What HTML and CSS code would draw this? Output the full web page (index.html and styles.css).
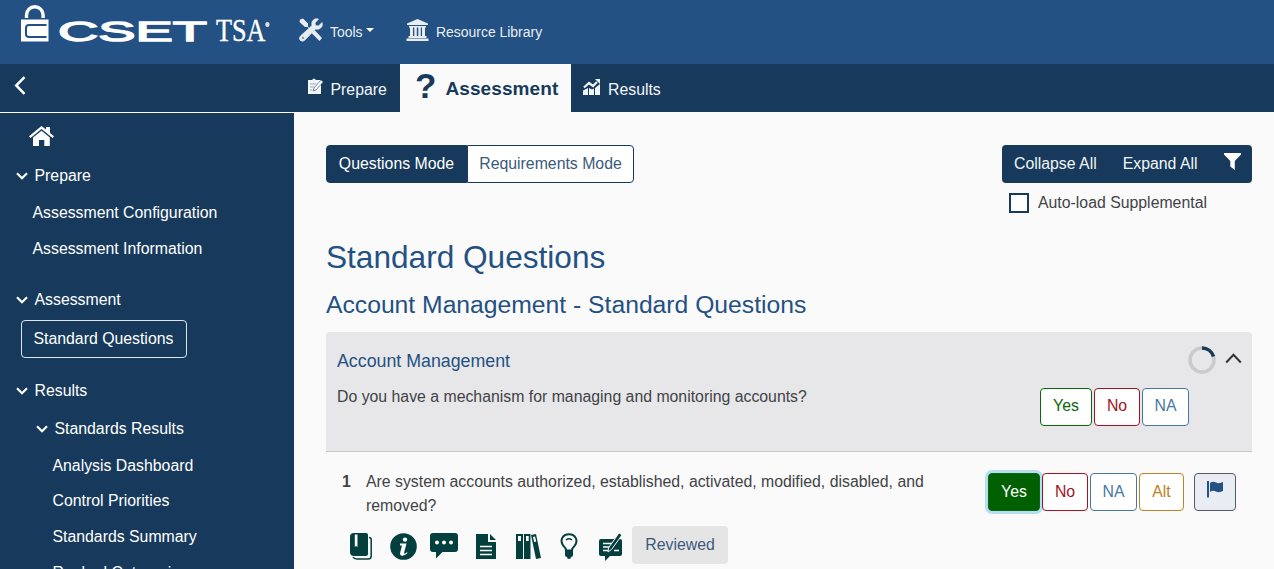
FILE: index.html
```html
<!DOCTYPE html>
<html lang="en">
<head>
<meta charset="utf-8">
<title>CSET TSA - Standard Questions</title>
<link rel="stylesheet" href="styles.css">
</head>
<body>
<header class="topbar">
  <svg class="logo" width="260" height="54" viewBox="0 0 260 54" fill="#fff">
    <path d="M6.500 18v-3a8.300 8.300 0 0 1 16.600 0v3" fill="none" stroke="#fff" stroke-width="3.400"/>
    <path d="M1 19.500h27.500v22H1z"/>
    <path d="M26.500 25H9q-3 0-3 3v6q0 3 3 3h17.500" fill="none" stroke="#235183" stroke-width="2"/>
    <text class="logo-cset" x="38" y="40.500" textLength="149" lengthAdjust="spacingAndGlyphs">CSET</text>
    <text class="logo-tsa" x="196" y="41" textLength="53" lengthAdjust="spacingAndGlyphs">TSA<tspan class="logo-reg" dy="-14">®</tspan></text>
  </svg>
  <a class="top-link tools">
    <svg width="24" height="24" viewBox="0 0 24 24" fill="#e8edf2"><path d="M1 1.500 4 .5 9 5.500v3l4.500 4.500 2-1 7.500 8-2.500 3-8-8 .5-2L8.500 9H6L.5 4z"/><path d="M23 4.500 19.500 8l-3-.5L16 5l3.500-4C15 0 12 3 13 7.500l-11 10c-4 4 1 7.500 4 4.500l10.500-11c4 1 8-2 6.500-6.500zM4 18.700a1.200 1.200 0 1 1 0 2.400 1.200 1.200 0 0 1 0-2.400z" fill-rule="evenodd" stroke="#e8edf2" stroke-width=".7"/></svg>
    <span>Tools</span><i class="caret"></i>
  </a>
  <a class="top-link library">
    <svg width="23" height="22" viewBox="0 0 23 22" fill="#e8edf2"><path d="M11.500 0 22 4.500V6H1V4.500zM3 7h17v1.500H3zM4 8h3v9H4zm4.300 0h2.500v9H8.300zm4 0h2.500v9h-2.500zM16 8h3v9h-3zM2.500 17h18v2h-18zM.5 19.500h22V22H.5z"/></svg>
    <span>Resource Library</span>
  </a>
</header>

<nav class="tabbar">
  <div class="collapse"><svg width="12" height="19" viewBox="0 0 12 19"><path d="M10.500 1.200 2.200 9.500l8.300 8.300" fill="none" stroke="#fff" stroke-width="2.500"/></svg></div>
  <a class="tab tab-prepare">
    <svg width="17" height="18" viewBox="0 0 17 18"><path d="M1 2h4q2-3 4 0h5v14H1z" fill="#f2f5f7"/><path d="M3 6h6M3 9h4M3 12h2" stroke="#9aabb9"/><path d="m6 13 1-3 7-8 2 2-7 8z" fill="#fff" stroke="#6d8296" stroke-width=".9"/></svg>
    <span>Prepare</span>
  </a>
  <a class="tab active"><span class="qmark">?</span><span class="tab-title">Assessment</span></a>
  <a class="tab tab-results">
    <svg width="18" height="17" viewBox="0 0 18 17" fill="#f2f5f7"><path d="M0 11.500 5 9v7H0zM6 9l3 1.500 2-1V16H6zm6 0 5-4v11h-5z"/><path d="m1 8.500 5-4.500 4 3 4-4" fill="none" stroke="#f2f5f7" stroke-width="2.200"/><path d="M12 0h5v5z"/></svg>
    <span>Results</span>
  </a>
</nav>

<div class="body">
  <aside class="sidebar">
    <div class="home"><svg width="25" height="20" viewBox="0 0 25 20" fill="#fff"><path d="M12.500 0 17 3.600V1h4v6l4 3.300-1.500 1.700-11-9-11 9L0 10.300z"/><path d="m12.500 4.800 8.300 6.800V20h-5.500v-6H10v6H4v-8.400z"/></svg></div>
    <div class="group"><svg class="chev" viewBox="0 0 12 8"><path d="m1 1.300 5 5 5-5"/></svg>Prepare</div>
    <div class="item">Assessment Configuration</div>
    <div class="item">Assessment Information</div>
    <div class="group spaced"><svg class="chev" viewBox="0 0 12 8"><path d="m1 1.300 5 5 5-5"/></svg>Assessment</div>
    <div class="current">Standard Questions</div>
    <div class="group spaced"><svg class="chev" viewBox="0 0 12 8"><path d="m1 1.300 5 5 5-5"/></svg>Results</div>
    <div class="group nested"><svg class="chev" viewBox="0 0 12 8"><path d="m1 1.300 5 5 5-5"/></svg>Standards Results</div>
    <div class="item deep">Analysis Dashboard</div>
    <div class="item deep">Control Priorities</div>
    <div class="item deep">Standards Summary</div>
    <div class="item deep">Ranked Categories</div>
  </aside>

  <main class="content">
    <div class="toolbar">
      <div class="modes"><button class="mode on">Questions Mode</button><button class="mode">Requirements Mode</button></div>
      <div class="controls">
        <div class="expanders"><span>Collapse All</span><span>Expand All</span>
          <svg width="17" height="17" viewBox="0 0 17 17" fill="#fff"><path d="M0 0h17v1.500L10.800 8v9L6.300 13.500V8L0 1.500z"/></svg></div>
        <label class="autoload"><i class="box"></i>Auto-load Supplemental</label>
      </div>
    </div>
    <h1>Standard Questions</h1>
    <h2>Account Management - Standard Questions</h2>

    <section class="panel">
      <div class="panel-head">
        <h3>Account Management</h3>
        <div class="status">
          <svg width="28" height="28" viewBox="0 0 28 28" fill="none" stroke-width="3.500"><circle cx="14" cy="14" r="12" stroke="#c9cacc"/><path d="M14 2a12 12 0 0 1 11.500 8.500" stroke="#173a5c"/></svg>
          <svg width="17" height="11" viewBox="0 0 17 11"><path d="m1.200 9.500 7.300-7.800 7.300 7.800" fill="none" stroke="#333" stroke-width="2"/></svg>
        </div>
      </div>
      <div class="panel-row">
        <p>Do you have a mechanism for managing and monitoring accounts?</p>
        <div class="answers"><button class="ans yes">Yes</button><button class="ans no">No</button><button class="ans na">NA</button></div>
      </div>
    </section>

    <section class="question">
      <b class="num">1</b>
      <div class="q-main">
        <p>Are system accounts authorized, established, activated, modified, disabled, and removed?</p>
        <div class="tools-row">
          <svg class="ic-book" width="23" height="28" viewBox="0 0 23 28" fill="#043f3f"><path d="M4 0h12q2 0 2 2v19q0 2-2 2H4q-4 0-4-4V4q0-4 4-4z"/><path d="M19 4.500q2.200 0 2.200 2V23q0 3-3 3H7q-3 0-4-2" fill="none" stroke="#043f3f" stroke-width="1.500"/><path d="M4.800 1.500h2.700V14l-1.300-1-1.400 1z" fill="#fafafa"/></svg>
          <svg class="ic-info" width="27" height="27" viewBox="0 0 27 27"><circle cx="13.500" cy="13.500" r="13.300" fill="#043f3f"/><circle cx="15" cy="6.600" r="2.200" fill="#fff"/><path d="M10 10.500h6.500l-2.500 9.500q0 1.500 3-.8l.5.800q-3.500 3.500-6.500 2.500-1.500-1-.8-3L12 12.500h-2z" fill="#fff"/></svg>
          <svg class="ic-comment" width="28" height="26" viewBox="0 0 28 26" fill="#043f3f"><path d="M3 0h22q3 0 3 3v13q0 3-3 3H12.500L6 25.500V19H3q-3 0-3-3V3q0-3 3-3z"/><g fill="#fff"><circle cx="7" cy="9.500" r="2"/><circle cx="14" cy="9.500" r="2"/><circle cx="21" cy="9.500" r="2"/></g></svg>
          <svg class="ic-doc" width="20" height="25" viewBox="0 0 20 25" fill="#043f3f"><path d="M0 0h12v8h8v17H0zM14 0l6 6h-6z"/><path d="M4 12.500h12M4 16.500h12M4 20.500h12" stroke="#fff" stroke-width="1.700"/></svg>
          <svg class="ic-shelf" width="25" height="25" viewBox="0 0 25 25" fill="#043f3f"><path d="M0 0h7v25H0zM8 0h6.500v25H8zM15 1l5-1 5 24-5 1z"/><path d="M2 2h3v5H2zm8 0h2.700v5H10zm7 1 2-.5 1.200 5-2 .5z" fill="#fff"/></svg>
          <svg class="ic-bulb" width="18" height="26" viewBox="0 0 18 26"><path d="M6 17.500q0-2.500-2.500-4.500C-1 7 3 1.200 9 1.200S19 7 14.500 13Q12 15 12 17.500z" fill="none" stroke="#043f3f" stroke-width="2"/><path d="M5 18h8v4q0 2-2 2 0 2-2 2t-2-2q-2 0-2-2z" fill="#043f3f"/><path d="M6 7q3-2.500 6 0" fill="none" stroke="#043f3f" stroke-width="1.500"/></svg>
          <svg class="ic-note" width="24" height="29" viewBox="0 0 24 29" fill="#043f3f"><path d="M2 7h19q2 0 2 2v13q0 2-2 2H11l-5 5v-5H2q-2 0-2-2V9q0-2 2-2z"/><path d="M4 11.500h10M4 15h8M4 18.500h5M15 18.500h5" stroke="#fff" stroke-width="1.400"/><path d="M20 .8 23 3 12.500 17.500 9 20l.5-4z" stroke="#fafafa" stroke-width="1"/></svg>
          <span class="reviewed">Reviewed</span>
        </div>
      </div>
      <div class="answers q-answers"><button class="ans yes chosen">Yes</button><button class="ans no">No</button><button class="ans na">NA</button><button class="ans alt">Alt</button>
        <button class="ans flag"><svg width="17" height="17" viewBox="0 0 17 17" fill="#235183"><path d="M0 0h2v16.500H0z"/><path d="M3 2q3-2 6-.5t7-.5v9q-4 2-7 .5T3 11z"/></svg></button></div>
    </section>
  </main>
</div>
</body>
</html>
```

FILE: styles.css
```css
* { box-sizing: border-box; }
body {
  margin: 0;
  height: 569px;
  overflow: hidden;
  display: flex;
  flex-direction: column;
  background: #fafafa;
  color: #414347;
  font: 15.83px/24px "Liberation Sans", Arial, sans-serif;
}
svg { display: block; flex: none; }
button { font: inherit; margin: 0; padding: 0; }
h1, h2, h3, p { margin: 0; font-weight: 400; }

.topbar {
  flex: none;
  height: 64px;
  display: flex;
  align-items: flex-start;
  padding-left: 20px;
  background: #235183;
  color: #e8edf2;
}
.logo-cset { font: 28px "Liberation Sans", sans-serif; stroke: #fff; stroke-width: 1.3; }
.logo-tsa { font: 32px "Liberation Serif", serif; stroke: #fff; stroke-width: .4; }
.logo-reg { font: 6px "Liberation Sans", sans-serif; }
.top-link { display: flex; align-items: center; height: 28px; font-size: 13.95px; }
.top-link span { padding-top: 3px; }
.tools { margin: 16px 0 0 19px; gap: 7px; width: 107px; }
.caret { border: 4px solid transparent; border-top-color: #fff; border-bottom: 0; margin: 0 0 0 -4px; }
.library { margin-top: 16px; gap: 7px; }

.tabbar { flex: none; height: 48px; display: flex; background: #173a5c; color: #f2f5f7; }
.collapse { width: 294px; padding: 12px 0 0 14px; }
.tab { display: flex; align-items: center; gap: 7px; padding-top: 3px; }
.tab-prepare { width: 106px; padding-left: 12.500px; }
.tab-prepare svg, .tab-results svg { margin-top: -5px; }
.tab.active { width: 171px; padding: 0 0 0 15px; gap: 9px; background: #fafafa; color: #173a5c; height: 49px; z-index: 1; }
.qmark { font-size: 35px; font-weight: 700; line-height: 44px; margin-top: -5px; }
.tab-title { font-size: 19px; font-weight: 700; letter-spacing: .1px; }
.tab-results { padding-left: 12px; }

.body { flex: 1; min-height: 0; display: flex; }
.sidebar { width: 294px; flex: none; overflow: hidden; border-top: 1px solid #fff; background: #173a5c; color: #fff; }
.home { height: 44px; padding: 13px 0 0 29px; }
.group { height: 38px; display: flex; align-items: center; gap: 7px; padding-left: 15.500px; }
.group.spaced { margin-top: 14px; }
.group.nested { padding-left: 35.500px; }
.chev { width: 12px; height: 8px; fill: none; stroke: #fff; stroke-width: 2.2; }
.item { height: 35.800px; line-height: 36px; padding-left: 32.500px; }
.item.deep { padding-left: 52.500px; }
.current { width: 166px; height: 38px; margin: 1px 0 0 20.500px; border: 1px solid #dce6f0; border-radius: 4px; line-height: 35px; padding-left: 12px; white-space: nowrap; }

.content { flex: 1; padding: 33px 22px 0 32px; }
.toolbar { display: flex; justify-content: space-between; height: 92px; }
.modes { display: flex; height: 38px; }
.mode { width: 167px; border: 1px solid #173a5c; border-radius: 0 4px 4px 0; background: #fff; color: #3c5a7b; padding-bottom: 1px; }
.mode.on { width: 141px; border-radius: 4px 0 0 4px; background: #173a5c; color: #fff; }
.expanders { width: 250px; height: 38px; display: flex; align-items: center; gap: 26px; padding: 0 0 1px 12px; background: #173a5c; color: #f2f5f7; border-radius: 4px; white-space: nowrap; }
.expanders svg { margin-top: -4px; }
.autoload { display: flex; align-items: center; gap: 9px; margin: 8px 0 0 7px; }
.box { width: 20px; height: 20px; border: 2px solid #173a5c; background: #fff; }
h1 { font-size: 31.600px; line-height: 40px; color: #235183; }
h2 { font-size: 24.700px; line-height: 30px; margin-top: 13px; color: #235183; }
.panel { margin-top: 12px; height: 120px; padding: 12px 10px 0 11px; background: #e7e7e9; border-bottom: 1px solid #c8c8ca; border-radius: 4px 4px 0 0; }
.panel-head { display: flex; justify-content: space-between; height: 44px; }
h3 { font-size: 17.800px; line-height: 34px; color: #235183; }
.status { display: flex; gap: 9px; padding-top: 2px; }
.status svg:last-child { margin-top: 7px; }
.panel-row { display: flex; justify-content: space-between; padding-right: 53px; }
.panel-row p { line-height: 18px; }
.answers { display: flex; gap: 2px; }
.ans { height: 38px; border: 1px solid; border-radius: 4px; background: #fff; padding-bottom: 1px; }
.yes { width: 52px; color: #0b680b; border-color: #0b680b; }
.no { width: 46px; color: #a0151f; }
.na { width: 47px; color: #4679a2; }
.alt { width: 45px; color: #bd8325; }
.panel-row .ans { padding-bottom: 2px; }
.chosen { background: #006000; color: #fff; box-shadow: 0 0 0 3px #b7ddf5; }
.flag { width: 42px; margin-left: 8px; background: #e9edf3; border-color: #555b66; display: grid; place-items: center; padding-bottom: 6px; }
.question { display: flex; padding: 18px 16px 0; }
.num { width: 24px; }
.q-main { width: 590px; }
.q-main p { width: 575px; }
.tools-row { display: flex; align-items: center; height: 38px; margin: 8px 0 0 -16px; }
.tools-row svg { margin-top: 2px; }
.tools-row .ic-book { margin-top: 4px; }
.ic-info { margin-left: 17px; }
.ic-comment { margin-left: 13px; }
.ic-doc { margin-left: 18px; }
.ic-shelf { margin-left: 20px; }
.ic-bulb { margin-left: 19px; }
.ic-note { margin-left: 21px; }
.reviewed { width: 96px; height: 38px; line-height: 37px; flex: none; margin-left: 9px; text-align: center; border-radius: 4px; background: #e5e5e6; color: #3c5a7b; }
.q-answers { margin: 3px 0 0 auto; }
```
